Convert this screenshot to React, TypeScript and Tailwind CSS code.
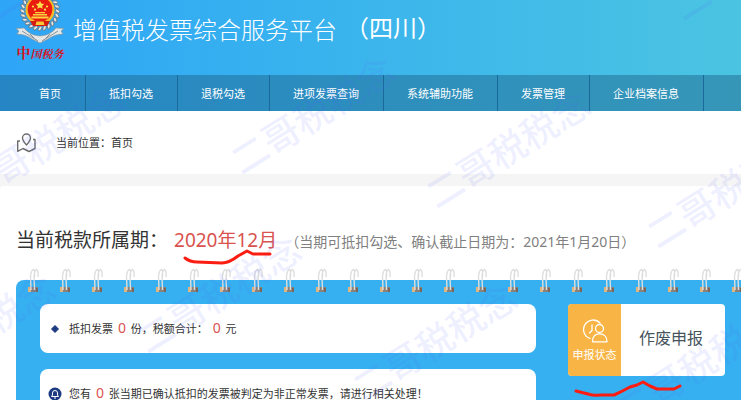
import React from 'react';

const sans = "font-['Noto_Sans','Noto_Sans_CJK_SC',sans-serif]";

const navItems = ['首页', '抵扣勾选', '退税勾选', '进项发票查询', '系统辅助功能', '发票管理', '企业档案信息'];

const watermarks = [
  { left: -251, top: 79 },
  { left: -36, top: 174 },
  { left: 234, top: 144 },
  { left: 429, top: 178 },
  { left: 650, top: 218 },
  { left: -106, top: 362 },
  { left: 140, top: 323 },
  { left: 356, top: 371 },
  { left: 619, top: 394 },
  { left: 488, top: -30 },
  { left: 676, top: -10 },
  { left: -12, top: -10 },
];

function Emblem() {
  const leaves = Array.from({ length: 19 }, (_, i) => {
    const deg = -45 + i * 15;
    const angle = (deg * Math.PI) / 180;
    return { x: 24 + 17.5 * Math.cos(angle), y: 11 + 17.5 * Math.sin(angle), deg };
  });
  return (
    <svg viewBox="0 0 48 44" className="block h-11 w-12" aria-hidden="true">
      {leaves.map((b, i) => (
        <ellipse
          key={i}
          cx={b.x}
          cy={b.y}
          rx="2.600"
          ry="1.500"
          transform={`rotate(${b.deg + 35} ${b.x} ${b.y})`}
          fill="#e4e7e8"
          stroke="#5f6c74"
          strokeWidth="0.8"
        />
      ))}
      <path d="M0 28.500L8 28Q13 35 24 36Q35 35 40 28L48 28.500L45 31L47 34Q39 34 32 39L24 43L16 39Q9 34 1 34L3 31Z" fill="#e4e7e8" stroke="#8c979e" strokeWidth="0.7" />
      <path d="M6 31Q14 36 22 41M42 31Q34 36 26 41M14 34l4 4M34 34l-4 4" fill="none" stroke="#7d888f" strokeWidth="0.9" />
      <circle cx="24" cy="10" r="14.500" fill="#f6b924" />
      <circle cx="24" cy="9.500" r="12.300" fill="#ea1c10" />
      <path d="M14 21h20l-3 5H17z" fill="#d51b12" />
      <path d="M20.500 21.500h7l1 3.500h-9z" fill="#f8c733" />
      <path d="M15.500 16.500h17v2h-17zM17 14h14v1.500H17zM19 12h10v1.200H19z" fill="#fbd33f" />
      <path d="M24 1l1.300 2.600 2.900.3-2.100 2 .6 2.900-2.700-1.400-2.700 1.400.6-2.900-2.100-2 2.900-.3z" fill="#fde04d" />
      <g fill="#fde04d">
        <circle cx="17" cy="6.500" r="1.100" />
        <circle cx="19" cy="9.700" r="1.100" />
        <circle cx="29" cy="9.700" r="1.100" />
        <circle cx="31" cy="6.500" r="1.100" />
      </g>
    </svg>
  );
}

function Ring() {
  return (
    <svg viewBox="0 0 12 25" className="block h-[25px] w-3 shrink-0">
      <rect x="1" y="19" width="10" height="5" fill="#8b8178" />
      <rect x="1" y="19" width="3" height="5" fill="#e0b47c" />
      <rect x="9" y="20" width="2" height="4" fill="#77685a" />
      <path d="M4 22L3.500 8Q4.500 1.500 6.500 1.500Q8 2 7.500 9M7.500 22L7 8Q8 1.500 9.500 1.500Q11.500 2.500 11 9" fill="none" stroke="#dedede" strokeWidth="1.400" />
    </svg>
  );
}

function MapIcon() {
  return (
    <svg viewBox="0 0 20 20" className="h-5 w-5" fill="none" stroke="#6d6d6d" strokeWidth="1.400" strokeLinejoin="round" aria-hidden="true">
      <path d="M10.500 12C8 9.300 6.500 7.500 6.500 5a4 4 0 0 1 8 0C14.500 7.500 13 9.300 10.500 12Z" />
      <path d="M4 8H1.700v10.300L7 15.500l6 3 6-3V6.500h-2" />
    </svg>
  );
}

function StatusIcon() {
  return (
    <svg viewBox="0 0 26 24" className="h-6 w-[26px]" fill="none" stroke="#fff" strokeWidth="1.300" strokeLinecap="round" strokeLinejoin="round" aria-hidden="true">
      <path d="M8 19.500A9.500 9.500 0 1 1 18 4" />
      <path d="M10 6v5.500l-2.500 2.500" />
      <circle cx="17.500" cy="9.500" r="4" />
      <path d="M10.500 22.800c0-5 2.500-8 7-8s7.500 3 7.500 8z" />
    </svg>
  );
}

function Count({ value }: { value: number }) {
  return <span className="mx-0.5 text-sm leading-4 text-[#d9534f]">{value}</span>;
}

export default function App() {
  return (
    <div className={`relative h-screen overflow-hidden bg-white text-[11px] leading-4 text-[#333] ${sans}`}>
      <header className="bg-linear-to-r from-[#2ea5f7] via-[#3bb5ec] to-[#4bc4e2] text-white">
        <div className="flex h-[75px] items-start pl-4">
          <div className="flex w-12 shrink-0 flex-col items-center">
            <Emblem />
            <span className="font-['Noto_Serif_CJK_SC','Noto_Sans_CJK_SC',serif] text-[11px] font-bold leading-4 whitespace-nowrap text-[#d9101c]">
              <span className="text-sm leading-4">中</span>
              <span className="italic">国税务</span>
            </span>
          </div>
          <h1 className="ml-[9px] pt-3 text-2xl leading-9 font-light whitespace-nowrap">增值税发票综合服务平台</h1>
          <span className="ml-2 pt-2.5 text-2xl leading-9 whitespace-nowrap">（四川）</span>
        </div>
        <nav className="flex h-9 bg-[#1c5f86]/45 pl-4">
          {navItems.map((item) => (
            <a key={item} href="#" className="flex items-center border-r border-[#19699b] pt-0.5 pr-6 pl-[23px] whitespace-nowrap">
              {item}
            </a>
          ))}
        </nav>
      </header>

      <div className="flex h-[63px] items-center gap-5 pl-4">
        <MapIcon />
        <span>当前位置：首页</span>
      </div>
      <div className="h-3 bg-[#f5f5f5]" />

      <main className="pl-4">
        <h2 className="flex items-center pt-10 text-[19px] leading-7 whitespace-nowrap">
          <span>当前税款所属期：</span>
          <span className="ml-1.5 text-[#d9534f]">2020年12月</span>
          <span className="ml-2 pt-1 text-sm text-[#808080]">（当期可抵扣勾选、确认截止日期为：2021年1月20日）</span>
        </h2>

        <section className="relative mt-[26px] rounded-tl-lg bg-[#36b0f0] pt-6 pr-4 pb-6 pl-6">
          <div className="absolute -top-3 right-0 left-[11px] flex gap-5 overflow-hidden" aria-hidden="true">
            {Array.from({ length: 60 }, (_, i) => (
              <Ring key={i} />
            ))}
          </div>
          <div className="flex items-start gap-8">
            <div className="flex flex-1 flex-col gap-4">
              <div className="flex h-[49px] items-center rounded-lg bg-white pl-[11px]">
                <svg viewBox="0 0 8 8" className="h-2 w-2" aria-hidden="true">
                  <path d="M4 .5L5.500 2L7.500 4L5.500 6L4 7.500L2.500 6L.5 4L2.500 2Z" fill="#1b3a80" stroke="#1b3a80" />
                </svg>
                <p className="ml-2.5 whitespace-nowrap">
                  抵扣发票 <Count value={0} /> 份，税额合计： <Count value={0} /> 元
                </p>
              </div>
              <div className="flex h-[49px] items-center rounded-lg bg-white pl-2">
                <svg viewBox="0 0 14 14" className="h-3.5 w-3.5" aria-hidden="true">
                  <circle cx="7" cy="7" r="6.500" fill="#1b3a80" />
                  <path d="M3.500 9.500h7L9.500 8V6a2.500 2.500 0 0 0-5 0v2zM6 11h2" fill="none" stroke="#fff" />
                </svg>
                <p className="ml-[7px] whitespace-nowrap">
                  您有 <Count value={0} /> 张当期已确认抵扣的发票被判定为非正常发票，请进行相关处理！
                </p>
              </div>
            </div>
            <button type="button" className="flex h-[72px] w-[157px] overflow-hidden rounded bg-white">
              <span className="flex h-full w-[53px] flex-col items-center bg-[#f8b445] pt-[15px] text-white">
                <StatusIcon />
                <span className="mt-1 whitespace-nowrap">申报状态</span>
              </span>
              <span className="flex h-full flex-1 items-center justify-center pr-1 pb-1 text-base text-[#46545c]">作废申报</span>
            </button>
          </div>
        </section>
      </main>

      <div className="pointer-events-none absolute inset-0 overflow-hidden" aria-hidden="true">
        {watermarks.map((w, i) => (
          <span
            key={i}
            className="absolute origin-left rotate-[-32deg] text-[37px] leading-[40px] font-medium whitespace-nowrap text-[#5560ff]/10"
            style={{ left: w.left, top: w.top }}
          >
            二哥税税念
          </span>
        ))}
        <svg className="absolute top-0 left-0 h-[400px] w-[741px]" fill="none" stroke="#fb1d12" strokeWidth="3" strokeLinecap="round" strokeLinejoin="round">
          <path d="M185 258Q190 262 197 262L222 263Q229 263 238 256L247 251L253 254H270" />
          <path d="M576 391L588 394Q594 396 600 395H614Q621 392 630 387L637 385L643 382L650 386L657 389H674L680 386" />
        </svg>
      </div>
    </div>
  );
}
